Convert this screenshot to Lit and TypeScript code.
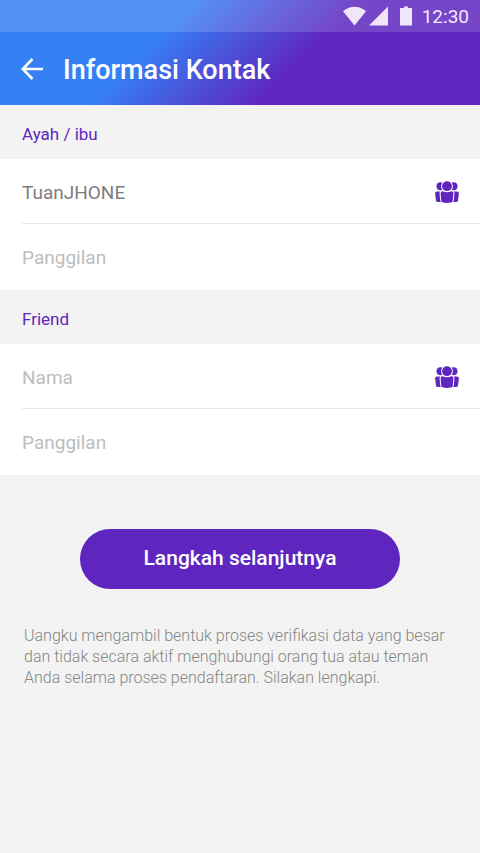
import { LitElement, html, svg, css } from "lit";
import { customElement, state } from "lit/decorators.js";

interface Group {
  id: string;
  title: string;
  name: string;
}

const people = svg`
  <svg class="people" viewBox="0 0 26 24" aria-hidden="true">
    <circle cx="6.500" cy="6.300" r="4"></circle>
    <circle cx="19.500" cy="6.300" r="4"></circle>
    <path d="M3 11.500h4v10.500H3.800Q2.200 22 2 20.400L1.100 13.500Q1 11.500 3 11.500Z"></path>
    <path d="M23 11.500h-4v10.500h3.200Q23.800 22 24 20.400L24.900 13.500Q25 11.500 23 11.500Z"></path>
    <path class="front" d="M8.600 11.300Q13 13 17.400 11.300Q19.500 11.400 19.400 13.500L18.800 20.400Q18.500 22.300 17 22.600Q13 23.300 9 22.600Q7.500 22.300 7.200 20.400L6.600 13.500Q6.500 11.400 8.600 11.300Z"></path>
    <circle class="front" cx="13" cy="6.200" r="4.900"></circle>
  </svg>`;

@customElement("app-root")
export class AppRoot extends LitElement {
  @state() private groups: Group[] = [
    { id: "parent", title: "Ayah / ibu", name: "TuanJHONE" },
    { id: "friend", title: "Friend", name: "" },
  ];

  static styles = css`
    :host {
      display: block;
      min-height: 100vh;
      background: #f3f3f3;
      font-family: Roboto, "Liberation Sans", sans-serif;
    }
    * {
      box-sizing: border-box;
    }
    button,
    input {
      font: inherit;
      border: 0;
      padding: 0;
      margin: 0;
      background: none;
    }
    button {
      cursor: pointer;
    }
    .top {
      color: #fff;
      background: linear-gradient(135deg, #3580f5 33%, #5f26bf 62%);
    }
    .status {
      display: flex;
      align-items: center;
      justify-content: flex-end;
      height: 32px;
      padding-right: 11px;
      background: rgba(255, 255, 255, 0.15);
      color: #f3e8fb;
      font-size: 19px;
    }
    .signals {
      width: 70px;
      height: 20px;
      margin-right: 10px;
      fill: #f0e6fa;
    }
    .bar {
      display: flex;
      align-items: center;
      gap: 19px;
      height: 73px;
      padding: 0 20px;
    }
    .back {
      display: flex;
      color: #fff;
    }
    .arrow {
      width: 24px;
      height: 24px;
      fill: none;
      stroke: currentColor;
      stroke-width: 2.6;
    }
    h1 {
      margin: 0;
      padding-top: 2px;
      font-size: 27px;
      font-weight: 500;
      line-height: 32px;
    }
    fieldset {
      display: block;
      min-width: 0;
      margin: 0;
      padding: 0;
      border: 0;
    }
    legend {
      display: block;
      width: 100%;
      height: 54px;
      padding: 2px 22px 0;
      color: #5f26bf;
      font-size: 17px;
      line-height: 54px;
    }
    .rows {
      padding-left: 22px;
      background: #fff;
    }
    .row {
      display: flex;
      align-items: center;
      height: 66px;
      padding-right: 20px;
    }
    .row.first {
      height: 65px;
      padding-top: 2px;
      border-bottom: 1px solid #e6e6e6;
    }
    .field {
      flex: 1;
      min-width: 0;
      height: 32px;
      color: #7d7d7d;
      font-size: 19px;
      outline: none;
    }
    .field::placeholder {
      color: #bdbdbd;
      opacity: 1;
    }
    .pick {
      display: flex;
    }
    .people {
      width: 26px;
      height: 24px;
      fill: #5f26bf;
    }
    .front {
      stroke: #fff;
      stroke-width: 2;
      paint-order: stroke;
    }
    .next {
      display: block;
      width: calc(100% - 160px);
      height: 60px;
      margin: 54px auto 0;
      padding-bottom: 2px;
      border-radius: 30px;
      background: #5f26bf;
      color: #fff;
      font-size: 21px;
      font-weight: 500;
    }
    .note {
      margin: 36px 24px 0;
      padding-bottom: 24px;
      color: #858585;
      font-size: 16px;
      font-weight: 300;
      line-height: 21px;
    }
  `;

  private setName(index: number, e: Event) {
    const name = (e.target as HTMLInputElement).value;
    this.groups = this.groups.map((g, i) => (i === index ? { ...g, name } : g));
  }

  private renderGroup(group: Group, index: number) {
    return html`
      <fieldset>
        <legend>${group.title}</legend>
        <div class="rows">
          <div class="row first">
            <input
              class="field"
              id="${group.id}-name"
              type="text"
              aria-label="Nama"
              placeholder="Nama"
              .value=${group.name}
              @input=${(e: Event) => this.setName(index, e)}
            />
            <button class="pick" type="button" aria-label="Kontak">${people}</button>
          </div>
          <div class="row">
            <input
              class="field"
              id="${group.id}-phone"
              type="tel"
              aria-label="Panggilan"
              placeholder="Panggilan"
            />
          </div>
        </div>
      </fieldset>
    `;
  }

  render() {
    return html`
      <header class="top">
        <div class="status">
          <svg class="signals" viewBox="0 0 70 20" aria-hidden="true">
            <path d="M1 5.200Q12.500 -3.600 24 5.200L12.500 19.500Z"></path>
            <path d="M46 0.500V19.500H27Z"></path>
            <path d="M58 2H62V0.500H66V2H70V19.500H58Z"></path>
          </svg>
          <time>12:30</time>
        </div>
        <div class="bar">
          <button class="back" type="button" aria-label="Kembali">
            <svg class="arrow" viewBox="0 0 24 24" aria-hidden="true">
              <path d="M23 12H3M12.500 2L2.800 12L12.500 22"></path>
            </svg>
          </button>
          <h1>Informasi Kontak</h1>
        </div>
      </header>
      <form @submit=${(e: Event) => e.preventDefault()}>
        ${this.groups.map((g, i) => this.renderGroup(g, i))}
        <button class="next" type="submit">Langkah selanjutnya</button>
      </form>
      <p class="note">
        Uangku mengambil bentuk proses verifikasi data yang besar dan tidak
        secara aktif menghubungi orang tua atau teman Anda selama proses
        pendaftaran. Silakan lengkapi.
      </p>
    `;
  }
}
